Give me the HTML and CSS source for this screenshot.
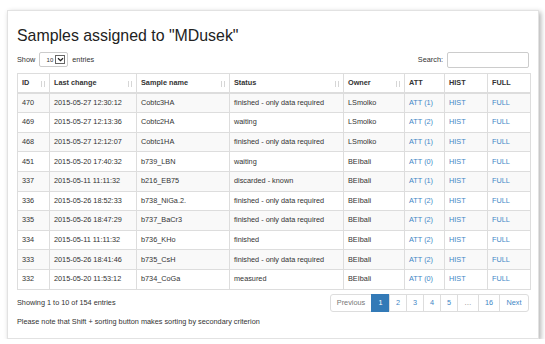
FILE: index.html
```html
<!doctype html>
<html lang="en">
<head>
  <meta charset="UTF-8">
  <title>Samples assigned to "MDusek"</title>
  <link rel="stylesheet" href="styles.css">
</head>
<body>
  <div class="card">
    <h1 class="title">Samples assigned to "MDusek"</h1>
    <div class="controls">
      <div class="length">
        Show
        <span class="select">10<span class="select-btn"><svg width="7" height="5" viewBox="0 0 7 5"><path d="M1 1.2 L3.5 3.7 L6 1.2" fill="none" stroke="#222" stroke-width="1.3"/></svg></span></span>
        entries
      </div>
      <div class="search">Search: <span class="search-input"></span></div>
    </div>
    <table class="samples">
      <thead>
        <tr>
          <th class="sort">ID</th>
          <th class="sort">Last change</th>
          <th class="sort">Sample name</th>
          <th class="sort">Status</th>
          <th class="sort">Owner</th>
          <th>ATT</th>
          <th>HIST</th>
          <th>FULL</th>
        </tr>
      </thead>
      <tbody>
        <tr><td>470</td><td>2015-05-27 12:30:12</td><td>Cobtc3HA</td><td>finished - only data required</td><td>LSmolko</td><td><a href="#">ATT (1)</a></td><td><a href="#">HIST</a></td><td><a href="#">FULL</a></td></tr>
        <tr><td>469</td><td>2015-05-27 12:13:36</td><td>Cobtc2HA</td><td>waiting</td><td>LSmolko</td><td><a href="#">ATT (2)</a></td><td><a href="#">HIST</a></td><td><a href="#">FULL</a></td></tr>
        <tr><td>468</td><td>2015-05-27 12:12:07</td><td>Cobtc1HA</td><td>finished - only data required</td><td>LSmolko</td><td><a href="#">ATT (1)</a></td><td><a href="#">HIST</a></td><td><a href="#">FULL</a></td></tr>
        <tr><td>451</td><td>2015-05-20 17:40:32</td><td>b739_LBN</td><td>waiting</td><td>BEIbali</td><td><a href="#">ATT (0)</a></td><td><a href="#">HIST</a></td><td><a href="#">FULL</a></td></tr>
        <tr><td>337</td><td>2015-05-11 11:11:32</td><td>b216_EB75</td><td>discarded - known</td><td>BEIbali</td><td><a href="#">ATT (1)</a></td><td><a href="#">HIST</a></td><td><a href="#">FULL</a></td></tr>
        <tr><td>336</td><td>2015-05-26 18:52:33</td><td>b738_NiGa.2.</td><td>finished - only data required</td><td>BEIbali</td><td><a href="#">ATT (2)</a></td><td><a href="#">HIST</a></td><td><a href="#">FULL</a></td></tr>
        <tr><td>335</td><td>2015-05-26 18:47:29</td><td>b737_BaCr3</td><td>finished - only data required</td><td>BEIbali</td><td><a href="#">ATT (2)</a></td><td><a href="#">HIST</a></td><td><a href="#">FULL</a></td></tr>
        <tr><td>334</td><td>2015-05-11 11:11:32</td><td>b736_KHo</td><td>finished</td><td>BEIbali</td><td><a href="#">ATT (2)</a></td><td><a href="#">HIST</a></td><td><a href="#">FULL</a></td></tr>
        <tr><td>333</td><td>2015-05-26 18:41:46</td><td>b735_CsH</td><td>finished - only data required</td><td>BEIbali</td><td><a href="#">ATT (2)</a></td><td><a href="#">HIST</a></td><td><a href="#">FULL</a></td></tr>
        <tr><td>332</td><td>2015-05-20 11:53:12</td><td>b734_CoGa</td><td>measured</td><td>BEIbali</td><td><a href="#">ATT (0)</a></td><td><a href="#">HIST</a></td><td><a href="#">FULL</a></td></tr>
      </tbody>
    </table>
    <div class="footer">
      <div class="info">Showing 1 to 10 of 154 entries</div>
      <ul class="pagination">
        <li class="disabled prev">Previous</li>
        <li class="active">1</li>
        <li>2</li>
        <li>3</li>
        <li>4</li>
        <li>5</li>
        <li class="disabled dots">…</li>
        <li class="wide">16</li>
        <li class="next">Next</li>
      </ul>
    </div>
    <p class="note">Please note that Shift + sorting button makes sorting by secondary criterion</p>
  </div>
</body>
</html>
```

FILE: styles.css
```css
html, body {
  margin: 0;
  background: #fff;
}
body {
  font-family: "Liberation Sans", Arial, sans-serif;
  font-size: 7.3px;
  color: #333;
}
.card {
  box-sizing: border-box;
  width: 532px;
  height: 329px;
  margin: 10px 0 0 7px;
  padding: 0 9px;
  border: 1px solid #e2e2e2;
  box-shadow: 2px 2px 5px rgba(0, 0, 0, 0.3);
  display: flex;
  flex-direction: column;
}
.title {
  margin: 15px 0 0;
  font-size: 15.9px;
  font-weight: normal;
  line-height: 20px;
  color: #222;
}
.controls {
  display: flex;
  justify-content: space-between;
  align-items: center;
  margin-top: 5px;
  height: 17px;
}
.length, .search {
  display: flex;
  align-items: center;
  gap: 4px;
}
.select {
  box-sizing: border-box;
  display: inline-flex;
  align-items: center;
  justify-content: flex-end;
  gap: 2px;
  width: 29px;
  height: 15px;
  padding: 2px;
  border: 1px solid #ccc;
  border-radius: 2px;
  font-size: 6px;
}
.select-btn {
  box-sizing: border-box;
  display: inline-flex;
  align-items: center;
  justify-content: center;
  width: 10px;
  height: 9px;
  border: 1px solid #666;
}
.search-input {
  box-sizing: border-box;
  display: inline-block;
  width: 82px;
  height: 16px;
  border: 1px solid #ccc;
  border-radius: 2px;
}
.samples {
  margin-top: 5px;
  width: 514px;
  border-collapse: collapse;
  border: 1px solid #ddd;
  table-layout: fixed;
}
.samples th, .samples td {
  box-sizing: border-box;
  height: 19.6px;
  padding: 0 4px;
  border: 1px solid #ddd;
  text-align: left;
  white-space: nowrap;
  line-height: 10px;
}
.samples th {
  font-weight: bold;
  border-bottom: 2px solid #ddd;
}
.samples th:nth-child(1) { width: 32px; }
.samples th:nth-child(2) { width: 87px; }
.samples th:nth-child(3) { width: 93px; }
.samples th:nth-child(4) { width: 114px; }
.samples th:nth-child(5) { width: 61px; }
.samples th:nth-child(6) { width: 40px; }
.samples th:nth-child(7) { width: 43px; }
.samples th.sort {
  position: relative;
}
.samples th.sort::after {
  content: "";
  position: absolute;
  right: 7px;
  top: 7px;
  width: 1px;
  height: 6px;
  background: #d6d6d6;
  box-shadow: 3px 0 0 #d6d6d6;
}
.samples tbody tr:nth-child(odd) {
  background: #f9f9f9;
}
.samples a {
  color: #3f87c6;
  text-decoration: none;
}
.footer {
  display: flex;
  justify-content: space-between;
  align-items: center;
  margin-top: 4px;
}
.pagination {
  display: flex;
  margin: 0;
  padding: 0;
  list-style: none;
}
.pagination li {
  box-sizing: border-box;
  height: 18px;
  width: 18px;
  padding: 0 5px;
  display: flex;
  align-items: center;
  justify-content: center;
  border: 1px solid #ddd;
  margin-left: -1px;
  color: #3f87c6;
}
.pagination .prev {
  width: 42px;
  border-radius: 3px 0 0 3px;
}
.pagination .next {
  width: 30px;
  border-radius: 0 3px 3px 0;
}
.pagination .dots {
  width: 22px;
}
.pagination .wide {
  width: 22px;
}
.pagination .disabled {
  color: #777;
}
.pagination .active {
  width: 19px;
  background: #337ab7;
  border-color: #337ab7;
  color: #fff;
}
.note {
  margin: 5px 0 0;
}
```
